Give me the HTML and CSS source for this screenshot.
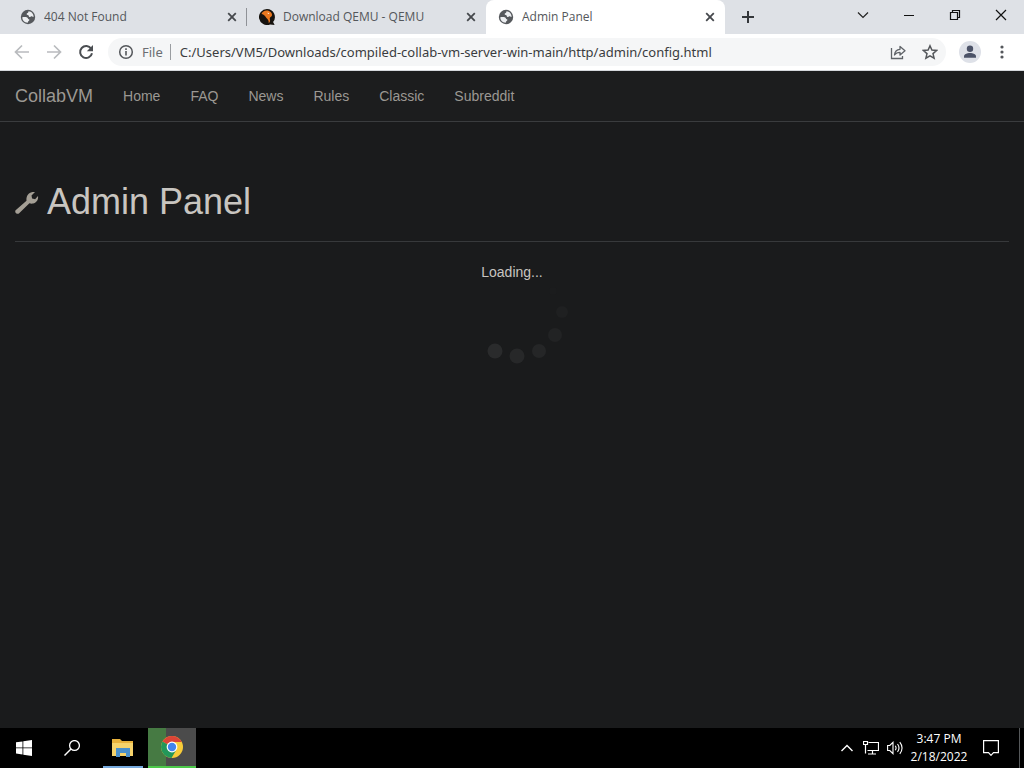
FILE: index.html
```
<!DOCTYPE html>
<html lang="en">
<head>
  <meta charset="UTF-8">
  <title>Admin Panel</title>
  <link rel="stylesheet" href="styles.css">
</head>
<body>
  <svg class="defs" aria-hidden="true">
    <symbol id="globe" viewBox="0 0 16 16">
      <circle cx="8" cy="8" r="7.2" fill="#56595d"/>
      <path d="M2.300 8.200c1.700-.3 3.500-.4 4.900.3 1 .5.5 1.500 1.600 1.800.9.300.7 1.200-.1 1.700-.7.400-.8 1-.9 1.700C4.300 13.600 2.200 11 2.300 8.200z" fill="#eceef1"/>
      <path d="M8.600 2.300c-.4.800-.2 1.300-1 1.700-.8.300-1.300.9-.8 1.600.5.600 1.300.2 1.700.8.400.7.400 1.500 1.400 1.600 1 .1 1.100-.8 2-.7.700.1 1 .8 1.700.7C13.700 5 11.500 2.500 8.600 2.300z" fill="#eceef1"/>
    </symbol>
    <symbol id="close" viewBox="0 0 16 16">
      <path d="M4.200 4.200l7.600 7.600M11.800 4.200l-7.600 7.600" stroke="#45484c" stroke-width="1.800"/>
    </symbol>
  </svg>

  <div class="desktop">
    <!-- Browser tabs -->
    <div class="tabstrip">
      <div class="tab divided">
        <svg class="icon"><use href="#globe"/></svg>
        <span class="tab-title">404 Not Found</span>
        <button class="tab-close" aria-label="Close tab"><svg class="icon"><use href="#close"/></svg></button>
      </div>
      <div class="tab">
        <svg class="icon" viewBox="0 0 16 16">
          <path d="M8 0a8 8 0 1 0 3 15.400L15.600 16l-1.500-3A8 8 0 0 0 8 0z" fill="#17130f"/>
          <path d="M2.500 5C3.500 2 7 .8 10 2c2.500 1 3.600 3.300 2.800 5-.6 1.100-1.800.9-2 2-.2 1.300.6 2 .2 3.300-.3 1-.8 1.400-1.300 1.900.2-2-.5-3.200-1.700-4.600C6.500 8 5.700 5.500 2.500 5z" fill="#e9771f"/>
          <path d="M8.500 3.600l2 .9-1.500.5z" fill="#fff"/>
        </svg>
        <span class="tab-title">Download QEMU - QEMU</span>
        <button class="tab-close" aria-label="Close tab"><svg class="icon"><use href="#close"/></svg></button>
      </div>
      <div class="tab active">
        <svg class="icon"><use href="#globe"/></svg>
        <span class="tab-title">Admin Panel</span>
        <button class="tab-close" aria-label="Close tab"><svg class="icon"><use href="#close"/></svg></button>
      </div>
      <button class="new-tab" aria-label="New tab">
        <svg class="icon" viewBox="0 0 16 16"><path d="M8 2v12M2 8h12" stroke="#34373b" stroke-width="2"/></svg>
      </button>
      <div class="window-buttons">
        <button aria-label="Search tabs"><svg class="icon" viewBox="0 0 16 16"><path d="M3 5.500l5 5 5-5" fill="none" stroke="#222" stroke-width="1.200"/></svg></button>
        <button aria-label="Minimize"><svg class="icon" viewBox="0 0 16 16"><path d="M3 8.500h10" stroke="#111"/></svg></button>
        <button aria-label="Restore"><svg class="icon" viewBox="0 0 16 16"><path d="M3.500 5.500h7v7h-7zM5.500 5.500v-2h7v7h-2" fill="none" stroke="#111" stroke-width="1.200"/></svg></button>
        <button aria-label="Close"><svg class="icon" viewBox="0 0 16 16"><path d="M3 3l10 10M13 3L3 13" stroke="#111" stroke-width="1.200"/></svg></button>
      </div>
    </div>

    <!-- Address bar -->
    <div class="toolbar">
      <button class="tool" aria-label="Back"><svg class="icon" viewBox="0 0 16 16"><path d="M15 8H2M8 1.500L1.500 8 8 14.500" fill="none" stroke="#b9bbbe" stroke-width="1.700"/></svg></button>
      <button class="tool" aria-label="Forward"><svg class="icon" viewBox="0 0 16 16"><path d="M1 8h13M8 1.500L14.500 8 8 14.500" fill="none" stroke="#b9bbbe" stroke-width="1.700"/></svg></button>
      <button class="tool" aria-label="Reload"><svg class="icon" viewBox="0 0 16 16"><path d="M13.200 4.800A6 6 0 1 0 14 9.300" fill="none" stroke="#4b4e52" stroke-width="2"/><path d="M15 1v6.200H8.800z" fill="#4b4e52"/></svg></button>
      <div class="omnibox">
        <svg class="icon" viewBox="0 0 16 16"><circle cx="8" cy="8" r="6.300" fill="none" stroke="#54575b" stroke-width="1.500"/><path d="M8 7v4.500M8 4.300v1.700" stroke="#54575b" stroke-width="1.600"/></svg>
        <label class="scheme" for="address">File</label>
        <input id="address" class="address" type="text" value="C:/Users/VM5/Downloads/compiled-collab-vm-server-win-main/http/admin/config.html">
        <button class="tool" aria-label="Share"><svg class="icon" viewBox="0 0 16 16"><path d="M1.500 4v10.500h11V12" fill="none" stroke="#5f6368" stroke-width="1.300"/><path d="M4.500 11c.3-3.800 2.200-5.500 5.500-5.700V2.500l5 4.300-5 4.200V8.300c-2.400 0-4.200.8-5.500 2.700z" fill="none" stroke="#5f6368" stroke-width="1.300" stroke-linejoin="round"/></svg></button>
        <button class="tool" aria-label="Bookmark this tab"><svg class="icon" viewBox="0 0 16 16"><path d="M8 1.800l1.900 4.300 4.700.4-3.600 3.100 1.100 4.600L8 11.800l-4.100 2.400L5 9.600 1.400 6.500l4.700-.4z" fill="none" stroke="#54575b" stroke-width="1.500"/></svg></button>
      </div>
      <button class="tool" aria-label="Profile"><svg class="avatar" viewBox="0 0 22 22"><circle cx="11" cy="11" r="11" fill="#dee1e8"/><circle cx="11" cy="7.800" r="3.200" fill="#4c5368"/><path d="M5 16.800v-1.300c0-2.200 3-3.400 6-3.400s6 1.200 6 3.400v1.300z" fill="#4c5368"/></svg></button>
      <button class="tool" aria-label="Menu"><svg class="icon" viewBox="0 0 16 16"><g fill="#54575b"><circle cx="8" cy="3" r="1.600"/><circle cx="8" cy="8" r="1.600"/><circle cx="8" cy="13" r="1.600"/></g></svg></button>
    </div>

    <!-- Page -->
    <div class="page">
      <nav class="navbar">
        <a class="brand" href="#">CollabVM</a>
        <a href="#">Home</a>
        <a href="#">FAQ</a>
        <a href="#">News</a>
        <a href="#">Rules</a>
        <a href="#">Classic</a>
        <a href="#">Subreddit</a>
      </nav>
      <main class="content">
        <h1 class="page-header">
          <svg class="wrench" viewBox="0 0 24 24"><path d="M.600 20.200L11.500 10.800C11 6.800 12.800 2.800 17.400 1.900l2.600.2-3.500 3.300.6 3 3 .9L23 6c.6 3.600-1.600 6.800-4.900 7.500-1.300.3-2.600.1-3.700-.3L3.900 23.600C2 24.600-.8 22.300.600 20.200z" fill="#a49f95"/></svg>
          Admin Panel
        </h1>
        <p class="loading">Loading...</p>
        <svg class="spinner" viewBox="0 0 120 100">
          <circle cx="101" cy="13" r="4" fill="#1b1c1d"/>
          <circle cx="110" cy="34" r="6" fill="#1f2021"/>
          <circle cx="103" cy="57" r="7" fill="#222324"/>
          <circle cx="87" cy="73" r="7" fill="#252627"/>
          <circle cx="65" cy="78" r="7.500" fill="#272829"/>
          <circle cx="43" cy="73" r="7.500" fill="#2a2b2c"/>
        </svg>
      </main>
    </div>

    <!-- Taskbar -->
    <div class="taskbar">
      <button class="task" aria-label="Start"><svg class="icon" viewBox="0 0 16 16"><path d="M0 2.300l6.500-.9v6.100H0zM7.300 1.300L16 0v7.500H7.300zM0 8.300h6.500v6.200L0 13.600zM7.300 8.300H16V16l-8.700-1.300z" fill="#fff"/></svg></button>
      <button class="task" aria-label="Search"><svg class="icon" viewBox="0 0 16 16"><circle cx="10.500" cy="5.500" r="4.900" fill="none" stroke="#fff" stroke-width="1.300"/><path d="M7 9L.5 15.500" stroke="#fff" stroke-width="1.400"/></svg></button>
      <button class="task explorer" aria-label="File Explorer"><svg class="icon-large" viewBox="0 0 22 22"><path d="M0 3h8l2 2h11v15H0z" fill="#e8b23c"/><path d="M0 7h21v13H0z" fill="#f6d36b"/><path d="M4 12h14v9h-4v-4H8v4H4z" fill="#4a90cc"/></svg></button>
      <button class="task chrome" aria-label="Google Chrome"><svg class="icon-large" viewBox="0 0 22 22"><circle cx="11" cy="11" r="11" fill="#f9cc39"/><path d="M11 11L1.500 5.500A11 11 0 0 1 20.500 5.500L20.500 6H11z" fill="#dc4437"/><path d="M11 11L1.500 5.500A11 11 0 0 0 10.500 22l5-8.500z" fill="#23975a"/><circle cx="11" cy="11" r="5.400" fill="#fff"/><circle cx="11" cy="11" r="4.200" fill="#4384ed"/></svg></button>
      <div class="tray">
        <button aria-label="Show hidden icons"><svg class="icon" viewBox="0 0 16 16"><path d="M2.500 11L8 5.500l5.500 5.500" fill="none" stroke="#fff" stroke-width="1.400"/></svg></button>
        <button aria-label="Network"><svg class="icon" viewBox="0 0 16 16"><path d="M5.500 2.500h10v8H4.500M.5 1.500h4v3h-4zM2.500 4.500v9M9.500 10.500v3M5 14h8" fill="none" stroke="#fff" stroke-width="1.200"/></svg></button>
        <button aria-label="Volume"><svg class="icon" viewBox="0 0 16 16"><path d="M.6 5.500h2.200L6 2.300v11.400l-3.200-3.200H.6zM8.300 5.800q1.500 2.200 0 4.400M10.500 4q3 4 0 8M12.800 2.200q4.500 5.800 0 11.600" fill="none" stroke="#fff" stroke-width="1.100"/></svg></button>
        <button class="clock"><span>3:47 PM</span><span>2/18/2022</span></button>
        <button class="notifications" aria-label="Notifications"><svg class="icon" viewBox="0 0 16 16"><path d="M.6.600h14.800v12H10.500L8 15.300l-2.500-2.700H.600z" fill="none" stroke="#fff" stroke-width="1.200"/></svg></button>
        <button class="show-desktop" aria-label="Show desktop"></button>
      </div>
    </div>
  </div>
</body>
</html>
```
FILE: styles.css
```
* {
  box-sizing: border-box;
}
body {
  margin: 0;
  font-family: "Liberation Sans", Arial, sans-serif;
  font-size: 14px;
  background-color: #1a1b1c;
}
button {
  display: flex;
  align-items: center;
  justify-content: center;
  padding: 0;
  border: none;
  background: none;
}
a {
  text-decoration: none;
}
.defs {
  display: none;
}
.desktop {
  display: flex;
  flex-direction: column;
  min-height: 100vh;
}
.icon {
  width: 16px;
  height: 16px;
  flex: none;
}
.icon-large {
  width: 22px;
  height: 22px;
}

/* Tabs */
.tabstrip {
  display: flex;
  height: 34px;
  padding-left: 8px;
  background-color: #dee1e6;
  font-family: "Open Sans", sans-serif;
  font-size: 12px;
  color: #54575b;
}
.tab {
  display: flex;
  align-items: center;
  gap: 8px;
  flex: 0 1 239px;
  min-width: 0;
  padding: 0 7px 0 12px;
}
.tab.divided {
  background: linear-gradient(#8f9297, #8f9297) right center / 1px 18px no-repeat;
}
.tab.active {
  background-color: #fff;
  border-radius: 8px 8px 0 0;
}
.tab-title {
  flex: 1;
  line-height: 16px;
  padding-bottom: 1px;
  white-space: nowrap;
  overflow: hidden;
}
.new-tab {
  width: 32px;
  margin-left: 7px;
}
.window-buttons {
  display: flex;
  margin-left: auto;
  height: 29px;
}
.window-buttons button {
  width: 46px;
}

/* Toolbar */
.toolbar {
  display: flex;
  align-items: center;
  height: 37px;
  padding: 0 6px;
  background-color: #fff;
  border-bottom: 1px solid #d5d8dc;
  font-family: "Noto Sans", sans-serif;
}
.tool {
  width: 32px;
  height: 28px;
  flex: none;
}
.omnibox {
  display: flex;
  align-items: center;
  flex: 1;
  height: 28px;
  margin: 0 8px 0 6px;
  padding-left: 10px;
  border-radius: 14px;
  background-color: #f5f6f7;
}
.scheme {
  margin-left: 8px;
  padding-right: 7px;
  border-right: 1px solid #9a9da1;
  font-size: 13px;
  line-height: 16px;
  color: #6b6e72;
}
.address {
  flex: 1;
  min-width: 0;
  padding: 0 0 0 9px;
  border: none;
  outline: none;
  background: none;
  font-family: inherit;
  font-size: 13px;
  color: #3a3c40;
}
.avatar {
  width: 22px;
  height: 22px;
}

/* Page */
.page {
  flex: 1;
  color: #c8c5c0;
}
.navbar {
  display: flex;
  align-items: center;
  gap: 30px;
  height: 51px;
  padding: 0 15px;
  background-color: #1c1d1e;
  border-bottom: 1px solid #3a3c3e;
}
.navbar a {
  color: #9b9893;
}
.navbar .brand {
  font-size: 18px;
}
.content {
  padding: 60px 15px 0;
}
.page-header {
  display: flex;
  align-items: center;
  gap: 8px;
  margin: 0 0 20px;
  padding-bottom: 19px;
  border-bottom: 1px solid #37393b;
  font-size: 36px;
  font-weight: normal;
  line-height: 40px;
}
.wrench {
  width: 24px;
  height: 24px;
}
.loading {
  margin: 0;
  line-height: 20px;
  text-align: center;
}
.spinner {
  display: block;
  width: 120px;
  height: 100px;
  margin: -4px auto 0;
}

/* Taskbar */
.taskbar {
  display: flex;
  height: 40px;
  background-color: #000;
}
.task {
  width: 48px;
}
.task.explorer {
  width: 40px;
  margin: 0 5px 0 7px;
  border-bottom: 2px solid #76a9dd;
}
.task.chrome {
  background: linear-gradient(to right, #467a43 18px, #4b4b4b 18px);
  border-bottom: 2px solid #4cc94a;
}
.tray {
  display: flex;
  margin-left: auto;
}
.tray button {
  width: 24px;
}
.tray .clock {
  flex-direction: column;
  width: 64px;
  font-family: "Open Sans", sans-serif;
  font-size: 12px;
  line-height: 18px;
  color: #fff;
}
.tray .notifications {
  width: 40px;
}
.tray .show-desktop {
  width: 5px;
  margin-left: 8px;
  border-left: 1px solid #55585a;
}
```
